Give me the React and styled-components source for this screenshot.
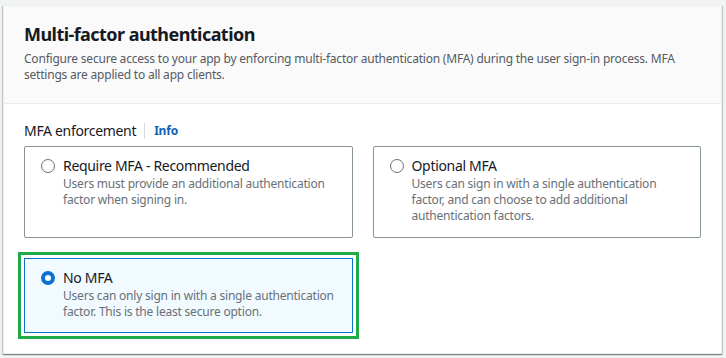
import React from "react";
import styled, { createGlobalStyle } from "styled-components";

const Global = createGlobalStyle`
  html, body { margin: 0; padding: 0; background: #f2f3f3; }
  body { font-family: "Noto Sans", "Open Sans", sans-serif; color: #16191f; }
  * { box-sizing: border-box; }
`;

const Page = styled.div`
  padding: 5px 4px 4px 3px;
`;

const Container = styled.section`
  background: #ffffff;
  border: 1px solid #eaeded;
  box-shadow: 0 1px 1px 0 rgba(0, 28, 36, 0.3), 1px 1px 1px 0 rgba(0, 28, 36, 0.15),
    -1px 1px 1px 0 rgba(0, 28, 36, 0.15);
  height: 349px;
`;

const Header = styled.header`
  background: #fafafa;
  border-bottom: 1px solid #eaeded;
  padding: 17px 20px 20px 20px;
`;

const Title = styled.h2`
  margin: 0;
  font-size: 18px;
  line-height: 22px;
  font-weight: 700;
  letter-spacing: -0.55px;
  color: #16191f;
`;

const Description = styled.p`
  margin: 6px 0 0;
  font-size: 12px;
  line-height: 16px;
  letter-spacing: -0.21px;
  color: #545b64;
`;

const Body = styled.div`
  padding: 17px 20px 20px;
`;

const LabelRow = styled.div`
  display: flex;
  align-items: center;
  margin-bottom: 5px;
`;

const Label = styled.span`
  font-size: 14px;
  line-height: 20px;
  letter-spacing: -0.32px;
  color: #16191f;
`;

const Info = styled.a`
  margin-left: 8px;
  padding-left: 9px;
  border-left: 1px solid #d5dbdb;
  font-size: 12px;
  line-height: 16px;
  font-weight: 700;
  letter-spacing: -0.2px;
  color: #0f62b8;
  text-decoration: none;
`;

const Tiles = styled.div`
  display: grid;
  grid-template-columns: 1fr 1fr;
  column-gap: 20px;
  row-gap: 20px;
  align-items: start;
`;

const Tile = styled.label`
  display: flex;
  align-items: flex-start;
  gap: 8px;
  padding: 9px 10px 12px 16px;
  border: 1px solid ${(p) => (p.$selected ? "#0972d3" : "#879596")};
  background: ${(p) => (p.$selected ? "#f1faff" : "#ffffff")};
  border-radius: ${(p) => (p.$highlight ? "0" : "2px")};
  min-height: ${(p) => (p.$tall ? "92px" : "auto")};
  outline: ${(p) => (p.$highlight ? "3px solid #1fab45" : "none")};
  outline-offset: 3px;
`;

const Radio = styled.span`
  flex: none;
  width: 14px;
  height: 14px;
  margin-top: 3px;
  border-radius: 50%;
  background: #ffffff;
  border: ${(p) => (p.$checked ? "4px solid #0972d3" : "1.5px solid #687078")};
`;

const TileText = styled.div`
  display: flex;
  flex-direction: column;
`;

const TileTitle = styled.span`
  font-size: 14px;
  line-height: 20px;
  letter-spacing: -0.32px;
  color: #16191f;
`;

const TileDesc = styled.span`
  font-size: 12px;
  line-height: 16px;
  letter-spacing: -0.21px;
  color: #687078;
`;

const options = [
  {
    id: "required",
    title: "Require MFA - Recommended",
    desc: "Users must provide an additional authentication factor when signing in.",
  },
  {
    id: "optional",
    title: "Optional MFA",
    desc: "Users can sign in with a single authentication factor, and can choose to add additional authentication factors.",
  },
  {
    id: "none",
    title: "No MFA",
    desc: "Users can only sign in with a single authentication factor. This is the least secure option.",
  },
];

export default function App() {
  const selected = "none";
  return (
    <>
      <Global />
      <Page>
        <Container>
          <Header>
            <Title>Multi-factor authentication</Title>
            <Description>
              Configure secure access to your app by enforcing multi-factor authentication (MFA) during the user
              sign-in process. MFA settings are applied to all app clients.
            </Description>
          </Header>
          <Body>
            <LabelRow>
              <Label>MFA enforcement</Label>
              <Info href="#">Info</Info>
            </LabelRow>
            <Tiles>
              {options.map((o, i) => (
                <Tile
                  key={o.id}
                  $selected={o.id === selected}
                  $highlight={o.id === selected}
                  $tall={i < 2}
                >
                  <Radio $checked={o.id === selected} />
                  <TileText>
                    <TileTitle>{o.title}</TileTitle>
                    <TileDesc>{o.desc}</TileDesc>
                  </TileText>
                </Tile>
              ))}
            </Tiles>
          </Body>
        </Container>
      </Page>
    </>
  );
}
